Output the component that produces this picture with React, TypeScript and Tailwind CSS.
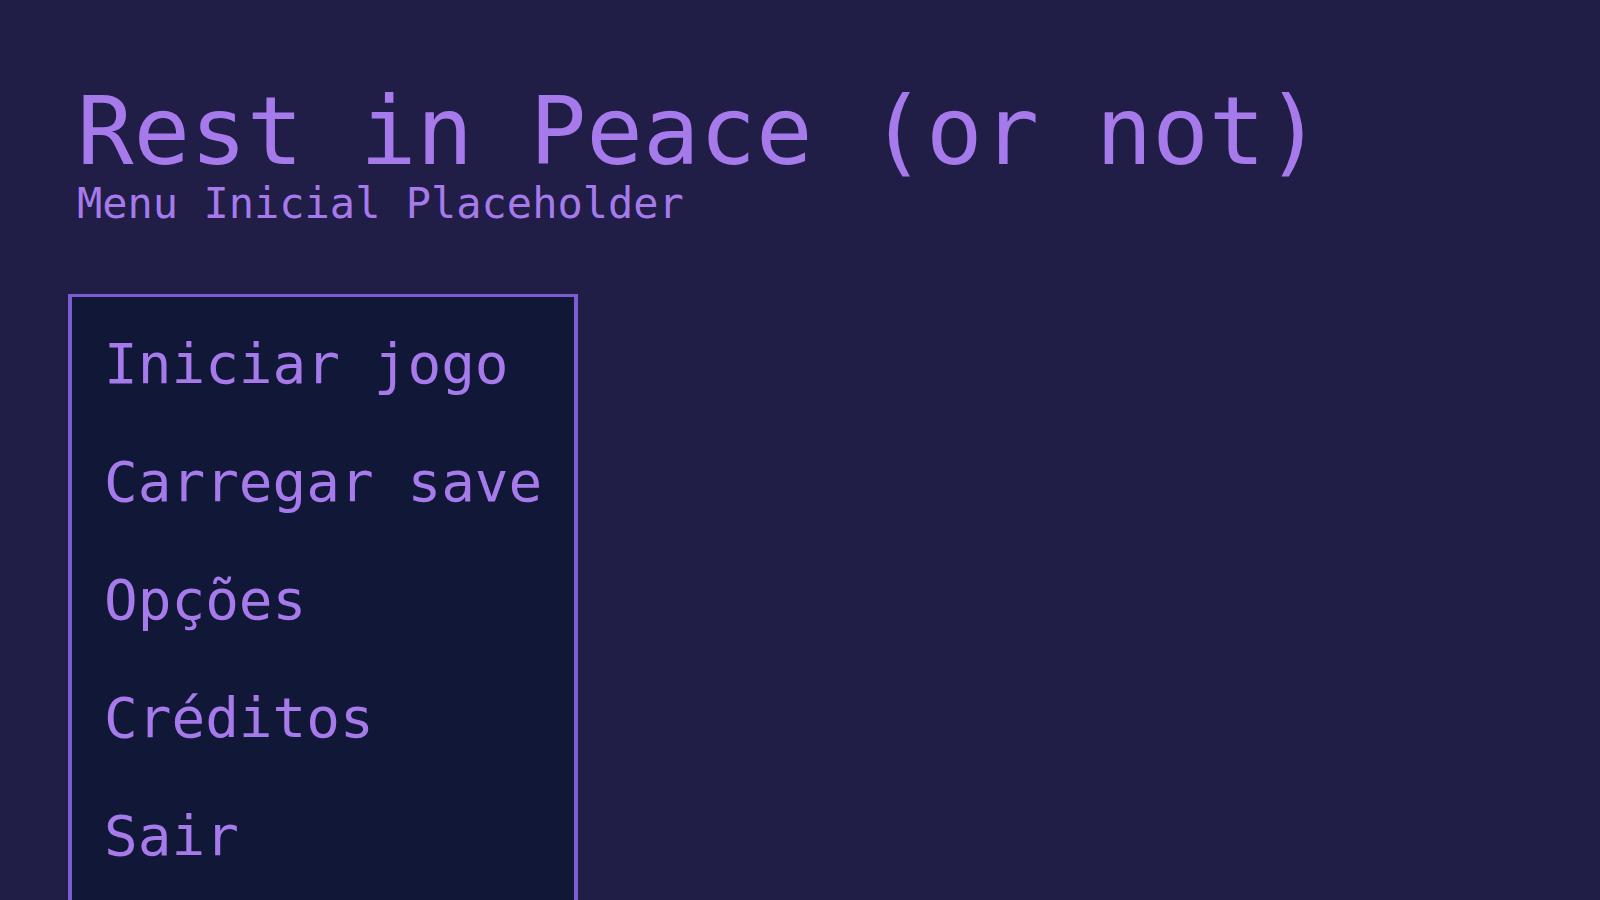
import React from "react";

const menuItems = ["Iniciar jogo", "Carregar save", "Opções", "Créditos", "Sair"];

const mono = "font-['DejaVu_Sans_Mono','Liberation_Mono',monospace]";

export default function App() {
  return (
    <div
      className={`h-[900px] w-full overflow-hidden bg-[#201d47] pl-[68px] pt-[84px] text-[#a67aea] ${mono}`}
    >
      {/* ------------------------------ Header ------------------------------ */}
      <div className="pl-[9px]">
        <h1 className="text-[94px] leading-[96px] font-normal">
          Rest in Peace (or not)
        </h1>
        <p className="mt-[3px] text-[42px] leading-[42px]">
          Menu Inicial Placeholder
        </p>
      </div>

      {/* ------------------------------- Menu ------------------------------- */}
      <div className="mt-[69px] w-fit border-4 border-t-[3px] border-b-0 border-[#7d5ed2] bg-[#111736] px-8 pt-2 pb-10">
        {menuItems.map((item) => (
          <button
            key={item}
            type="button"
            className="block text-left text-[56px] leading-[118px] hover:text-[#c4a5ff]"
          >
            {item}
          </button>
        ))}
      </div>
    </div>
  );
}
